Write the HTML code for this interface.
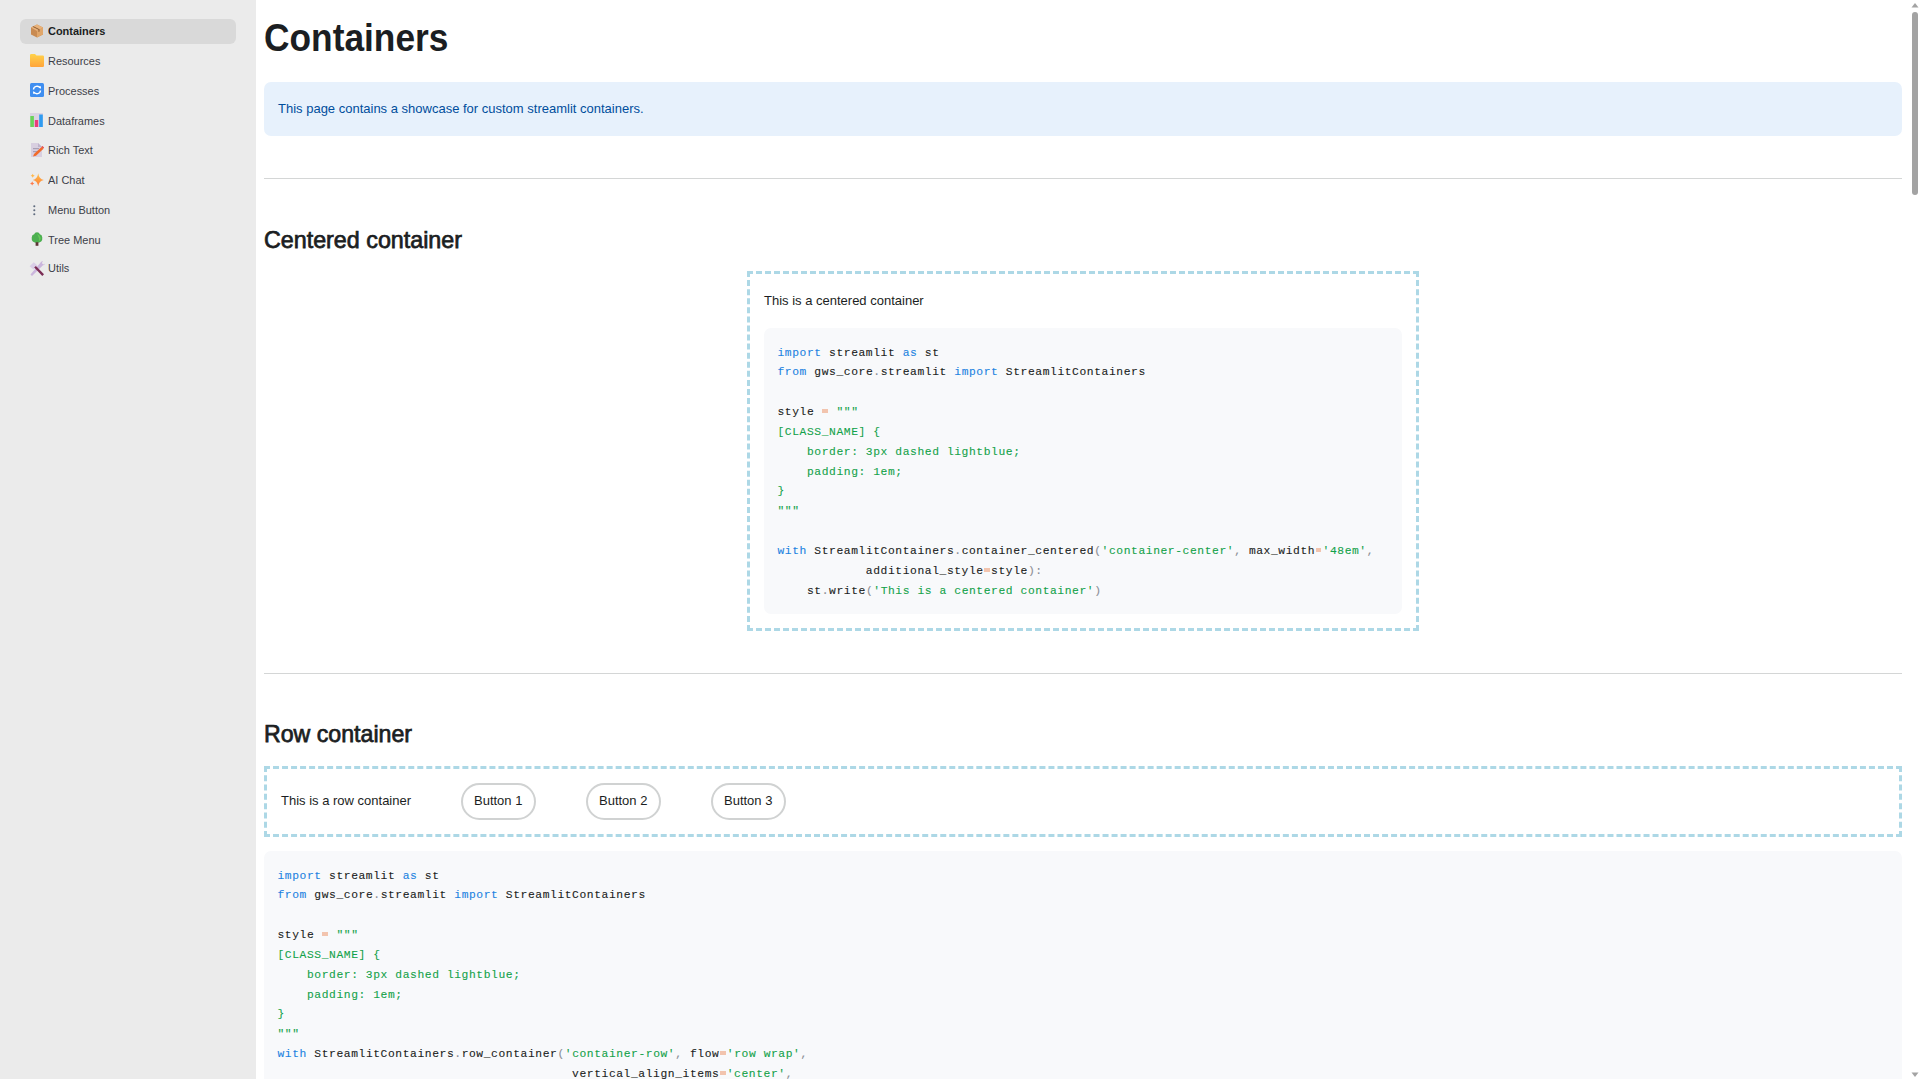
<!DOCTYPE html>
<html><head><meta charset="utf-8">
<style>
*{box-sizing:border-box;margin:0;padding:0}
html,body{width:1919px;height:1079px;overflow:hidden;background:#fff}
body{position:relative;font-family:"Liberation Sans",sans-serif;color:#1b1e22}
.abs{position:absolute}
#sb{position:absolute;left:0;top:0;width:256px;height:1079px;background:#ebebeb}
.pill{position:absolute;left:20px;top:19px;width:216px;height:25px;background:#d9d9d9;border-radius:6px}
.nav{position:absolute;left:48px;font-size:11.3px;line-height:14px;color:#3c3e48;white-space:nowrap;transform:scaleX(0.97);transform-origin:0 0}
.nav.act{font-weight:bold;color:#1b1e22}
.ico{position:absolute;left:30px;width:14px;height:14px}
.t{position:absolute;white-space:nowrap;line-height:1;transform-origin:0 0}
.hr{position:absolute;left:264px;width:1638px;height:1px;background:#d4d6d6}
.code{position:absolute;background:#f8f9fb;border-radius:7px;font-family:"Liberation Mono",monospace;font-size:12.25px;color:#1b1e22}
.code pre{position:absolute;-webkit-text-stroke:0.1px currentColor;font-family:"Liberation Mono",monospace;font-size:11.3px;letter-spacing:0.585px;line-height:19.85px;white-space:pre}
.eq{position:relative}.eq::before{content:"";position:absolute;left:0.4px;top:3.1px;width:5.9px;height:3.8px;background:#f2c4ae}
.k{color:#1c83e1}.s{color:#14a24a}.o{color:#eca58c}.p{color:#8b8e95}
.dash{position:absolute;border:3px dashed #add8e6}
.btn{position:absolute;top:783px;width:74.5px;height:36.5px;border:2px solid #d0d2d2;border-radius:19px;background:#fff}
</style></head><body>
<div id="sb">
  <div class="pill"></div>
  <!-- icons -->
  <svg class="ico" style="top:24px" viewBox="0 0 14 14"><path d="M7 0.5L13 3.5V10.5L7 13.5L1 10.5V3.5Z" fill="#c98b52"/><path d="M7 7L13 3.5V10.5L7 13.5Z" fill="#e0a66a"/><path d="M1 3.5L7 0.5L13 3.5L7 7Z" fill="#e8b27a"/><path d="M3.5 2.2L9.5 5.2V7.5L8.5 8V5.7L2.5 2.7Z" fill="#8a5a33"/></svg>
  <svg class="ico" style="top:54px;height:13px" viewBox="0 0 14 13"><path d="M0 1.2Q0 0 1.2 0H5L6.5 1.6H12.8Q14 1.6 14 2.8V11.8Q14 13 12.8 13H1.2Q0 13 0 11.8Z" fill="url(#gf)"/><defs><linearGradient id="gf" x1="0" y1="0" x2="0" y2="1"><stop offset="0" stop-color="#ffd24a"/><stop offset="1" stop-color="#ffa43a"/></linearGradient></defs></svg>
  <svg class="ico" style="top:83px" viewBox="0 0 14 14"><rect x="0" y="0" width="14" height="14" rx="1.5" fill="#3f8ef0"/><path d="M3.5 6.5A3.5 3.5 0 0 1 10 5" stroke="#fff" stroke-width="1.4" fill="none"/><path d="M10.5 7.5A3.5 3.5 0 0 1 4 9" stroke="#fff" stroke-width="1.4" fill="none"/><path d="M8.5 3.5L11 3.2L10.8 6Z" fill="#fff"/><path d="M5.5 10.5L3 10.8L3.2 8Z" fill="#fff"/></svg>
  <svg class="ico" style="top:113px;width:13px" viewBox="0 0 13 14"><rect x="0" y="0" width="13" height="14" fill="#dcd3e3"/><rect x="0.3" y="3" width="3.6" height="11" fill="#6bd35a"/><rect x="4.8" y="7" width="3.4" height="7" fill="#ea3d7b"/><rect x="9.2" y="1.5" width="3.6" height="12.5" fill="#2f9bf0"/></svg>
  <svg class="ico" style="top:143px;left:31px;width:13px" viewBox="0 0 13 14"><path d="M0 0H7L11 4V14H0Z" fill="#d8cfe0"/><path d="M7 0V4H11Z" fill="#bfb3cc"/><rect x="2" y="5" width="6" height="1.2" fill="#a8a0b4"/><rect x="2" y="8" width="5" height="1.2" fill="#a8a0b4"/><path d="M2 13.5L3 11L10.5 4L12.5 5.8L5 12.8Z" fill="#f26b2a"/><path d="M10.5 4L11.5 3L13 4.6L12.3 5.6Z" fill="#e83a3a"/></svg>
  <svg class="ico" style="top:173px;left:29.7px" viewBox="0 0 14 13"><path d="M8.2 -0.3Q8.9 5.4 13.8 6.4Q8.9 7.4 8.2 12.7Q7.5 7.4 2.8 6.4Q7.5 5.4 8.2 -0.3Z" fill="url(#gs)"/><path d="M2.7 0.2Q3 1.9 4.7 2.2Q3 2.5 2.7 4.2Q2.4 2.5 0.7 2.2Q2.4 1.9 2.7 0.2Z" fill="#ffb74a"/><path d="M2.2 7.8Q2.5 9.6 4.3 10Q2.5 10.3 2.2 12Q1.9 10.3 0 10Q1.9 9.6 2.2 7.8Z" fill="#ff7a4a"/><defs><linearGradient id="gs" x1="0" y1="0" x2="0" y2="1"><stop offset="0" stop-color="#ffc247"/><stop offset="1" stop-color="#ff7a3a"/></linearGradient></defs></svg>
  <svg class="ico" style="top:204.5px;left:32px;width:5px;height:11px" viewBox="0 0 5 11"><circle cx="2.3" cy="1.3" r="1.05" fill="#5f6b7e"/><circle cx="2.3" cy="5.3" r="1.05" fill="#5f6b7e"/><circle cx="2.3" cy="9.3" r="1.05" fill="#5f6b7e"/></svg>
  <svg class="ico" style="top:232px;left:31px;width:12px" viewBox="0 0 12 14"><path d="M6 0.3Q8.3 0.3 8.8 2.3Q11.2 2.8 11.3 5.5Q11.6 8 10.2 9.6Q8.5 11 6 11Q3.5 11 1.8 9.6Q0.4 8 0.7 5.5Q0.8 2.8 3.2 2.3Q3.7 0.3 6 0.3Z" fill="#4caf50"/><path d="M6 2Q9 3 9.8 6Q10 8.5 7 10Q9 8 7.5 5Q6.8 3.2 6 2Z" fill="#66c95a"/><rect x="4.6" y="10.2" width="2.8" height="3.6" fill="#5e3536"/></svg>
  <svg class="ico" style="top:261px;left:28.5px;width:16px;height:16px" viewBox="0 0 16 16"><path d="M1.5 13.5L3 15L14 4.2Q15.6 4.4 16 2.6L14.6 3.4L13.3 2.8L13.1 1.4L14 0.2Q12 -0.2 11.4 1.8Z" fill="#cbb6dd"/><path d="M0.6 5.2L4.8 1.2L8.4 4.6L4.4 8.6Z" fill="#d9cde6"/><path d="M5.2 6.6L6.9 4.9L15 13.3L13.3 15Z" fill="#7b2d55"/></svg>

  <div class="nav act" style="top:23.8px">Containers</div>
  <div class="nav" style="top:53.8px">Resources</div>
  <div class="nav" style="top:83.8px">Processes</div>
  <div class="nav" style="top:113.7px">Dataframes</div>
  <div class="nav" style="top:142.7px">Rich Text</div>
  <div class="nav" style="top:172.8px">AI Chat</div>
  <div class="nav" style="top:202.5px">Menu Button</div>
  <div class="nav" style="top:232.5px">Tree Menu</div>
  <div class="nav" style="top:261.4px">Utils</div>
</div>

<!-- main -->
<div class="t" style="left:264px;top:19.2px;font-size:38.5px;font-weight:bold;transform:scaleX(0.917)">Containers</div>

<div class="abs" style="left:264px;top:82px;width:1638px;height:54px;background:#e7f1fc;border-radius:7px"></div>
<div class="t" style="left:278px;top:102px;font-size:13px;color:#004e9c">This page contains a showcase for custom streamlit containers.</div>

<div class="hr" style="top:178px"></div>

<div class="t" style="left:264px;top:228px;font-size:24px;-webkit-text-stroke:0.75px #1b1e22;transform:scaleX(0.97)">Centered container</div>

<div class="dash" style="left:747px;top:271px;width:672px;height:360px"></div>
<div class="t" style="left:764px;top:293.9px;font-size:13px">This is a centered container</div>
<div class="code" style="left:764px;top:328px;width:638px;height:286px">
<pre style="left:13.5px;top:15.5px"><span class="k">import</span> streamlit <span class="k">as</span> st
<span class="k">from</span> gws_core<span class="p">.</span>streamlit <span class="k">import</span> StreamlitContainers

style <span class="eq"> </span> <span class="s">"""
[CLASS_NAME] {
    border: 3px dashed lightblue;
    padding: 1em;
}
"""</span>

<span class="k">with</span> StreamlitContainers<span class="p">.</span>container_centered<span class="p">(</span><span class="s">'container-center'</span><span class="p">,</span> max_width<span class="eq"> </span><span class="s">'48em'</span><span class="p">,</span>
            additional_style<span class="eq"> </span>style<span class="p">):</span>
    st<span class="p">.</span>write<span class="p">(</span><span class="s">'This is a centered container'</span><span class="p">)</span></pre>
</div>

<div class="hr" style="top:673px"></div>

<div class="t" style="left:264px;top:722.3px;font-size:24px;-webkit-text-stroke:0.75px #1b1e22;transform:scaleX(0.965)">Row container</div>

<div class="dash" style="left:264px;top:766px;width:1638px;height:71px"></div>
<div class="t" style="left:281px;top:794.4px;font-size:13px">This is a row container</div>
<div class="btn" style="left:461px"></div>
<div class="btn" style="left:586px"></div>
<div class="btn" style="left:711px"></div>
<div class="t" style="left:474px;top:794.4px;font-size:13px">Button 1</div>
<div class="t" style="left:599px;top:794.4px;font-size:13px">Button 2</div>
<div class="t" style="left:724px;top:794.4px;font-size:13px">Button 3</div>

<div class="code" style="left:264px;top:851px;width:1638px;height:260px">
<pre style="left:13.5px;top:15.5px"><span class="k">import</span> streamlit <span class="k">as</span> st
<span class="k">from</span> gws_core<span class="p">.</span>streamlit <span class="k">import</span> StreamlitContainers

style <span class="eq"> </span> <span class="s">"""
[CLASS_NAME] {
    border: 3px dashed lightblue;
    padding: 1em;
}
"""</span>
<span class="k">with</span> StreamlitContainers<span class="p">.</span>row_container<span class="p">(</span><span class="s">'container-row'</span><span class="p">,</span> flow<span class="eq"> </span><span class="s">'row wrap'</span><span class="p">,</span>
                                        vertical_align_items<span class="eq"> </span><span class="s">'center'</span><span class="p">,</span></pre>
</div>

<!-- scrollbar -->
<svg class="abs" style="left:1911px;top:2px;width:8px;height:6px" viewBox="0 0 8 6"><path d="M4 1L7.5 5.5H0.5Z" fill="#a3a3a3"/></svg>
<div class="abs" style="left:1912px;top:12px;width:6px;height:183px;background:#a3a3a3;border-radius:3px"></div>
<svg class="abs" style="left:1911px;top:1072px;width:8px;height:6px" viewBox="0 0 8 6"><path d="M4 5L7.5 0.5H0.5Z" fill="#a3a3a3"/></svg>
</body></html>
